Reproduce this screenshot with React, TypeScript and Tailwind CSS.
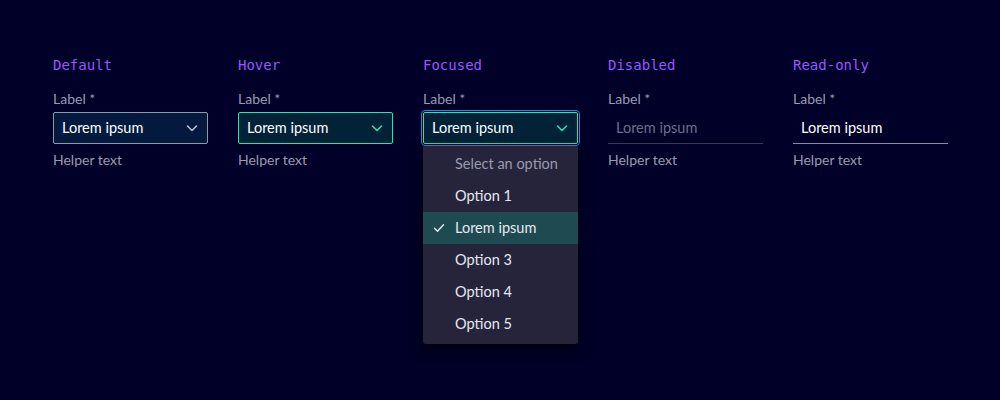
import React from "react";

const Chevron = ({ color }: { color: string }) => (
  <svg width="14" height="14" viewBox="0 0 14 14" fill="none">
    <path d="M2.5 5 L7 9.5 L11.5 5" stroke={color} strokeWidth="1.6" strokeLinecap="round" strokeLinejoin="round" />
  </svg>
);

const Heading = ({ children }: { children: React.ReactNode }) => (
  <div className="h-[20px] text-[14px] leading-[20px] text-[#9b55ff] [font-family:'DejaVu_Sans_Mono',monospace]">
    {children}
  </div>
);

const Label = () => <div className="mt-[15px] h-[18px] text-[14px] leading-[18px] text-[#9a9aae]">Label *</div>;
const Helper = () => <div className="mt-[6px] text-[14px] leading-[20px] text-[#9a9aae]">Helper text</div>;

const options = ["Select an option", "Option 1", "Lorem ipsum", "Option 3", "Option 4", "Option 5"];

export default function App() {
  return (
    <div className="w-[1000px] h-[400px] bg-[#000028] overflow-hidden [font-family:'Lato',sans-serif]">
      <div className="flex gap-[30px] pl-[53px] pt-[55px]">
        <div className="w-[155px]">
          <Heading>Default</Heading>
          <Label />
          <div className="mt-[4px] h-[32px] flex items-center justify-between px-[8px] border border-[#8c9aaa] rounded-[2px] bg-[#031a3e]">
            <span className="text-[14.5px] text-white">Lorem ipsum</span>
            <Chevron color="#b8c0cc" />
          </div>
          <Helper />
        </div>
        <div className="w-[155px]">
          <Heading>Hover</Heading>
          <Label />
          <div className="mt-[4px] h-[32px] flex items-center justify-between px-[8px] border border-[#2fe0b0] rounded-[2px] bg-[#022238]">
            <span className="text-[14.5px] text-white">Lorem ipsum</span>
            <Chevron color="#2fe0b0" />
          </div>
          <Helper />
        </div>
        <div className="w-[155px]">
          <Heading>Focused</Heading>
          <Label />
          <div className="relative mt-[4px]">
            <div className="absolute -inset-[2px] rounded-[4px] border border-[#1f8fd6]" />
            <div className="h-[32px] flex items-center justify-between px-[8px] border border-[#2fe0b0] rounded-[2px] bg-[#022238]">
              <span className="text-[14.5px] text-white">Lorem ipsum</span>
              <Chevron color="#2fe0b0" />
            </div>
            <div className="absolute left-0 top-[34px] w-[155px] pt-[2px] pb-[4px] bg-[#25243b] rounded-b-[3px] shadow-[0_6px_14px_rgba(0,0,0,0.7)] z-10">
              {options.map((o, i) => (
                <div
                  key={o}
                  className={`relative h-[32px] flex items-center pl-[32px] text-[14.5px] ${
                    i === 0 ? "text-[#9a9aae]" : "text-[#e8e8ee]"
                  } ${i === 2 ? "bg-[#1e4a52]" : ""}`}
                >
                  {i === 2 && (
                    <svg className="absolute left-[10px]" width="12" height="12" viewBox="0 0 12 12" fill="none">
                      <path d="M1.5 6.2 L4.5 9.2 L10.5 2.8" stroke="#e8e8ee" strokeWidth="1.4" strokeLinecap="round" strokeLinejoin="round" />
                    </svg>
                  )}
                  {o}
                </div>
              ))}
            </div>
          </div>
        </div>
        <div className="w-[155px]">
          <Heading>Disabled</Heading>
          <Label />
          <div className="mt-[4px] h-[32px] flex items-center px-[8px] border-b border-[#3a3a58]">
            <span className="text-[14.5px] text-[#6e6e8a]">Lorem ipsum</span>
          </div>
          <Helper />
        </div>
        <div className="w-[155px]">
          <Heading>Read-only</Heading>
          <Label />
          <div className="mt-[4px] h-[32px] flex items-center px-[8px] border-b border-[#8a8aa2]">
            <span className="text-[14.5px] text-white">Lorem ipsum</span>
          </div>
          <Helper />
        </div>
      </div>
    </div>
  );
}
